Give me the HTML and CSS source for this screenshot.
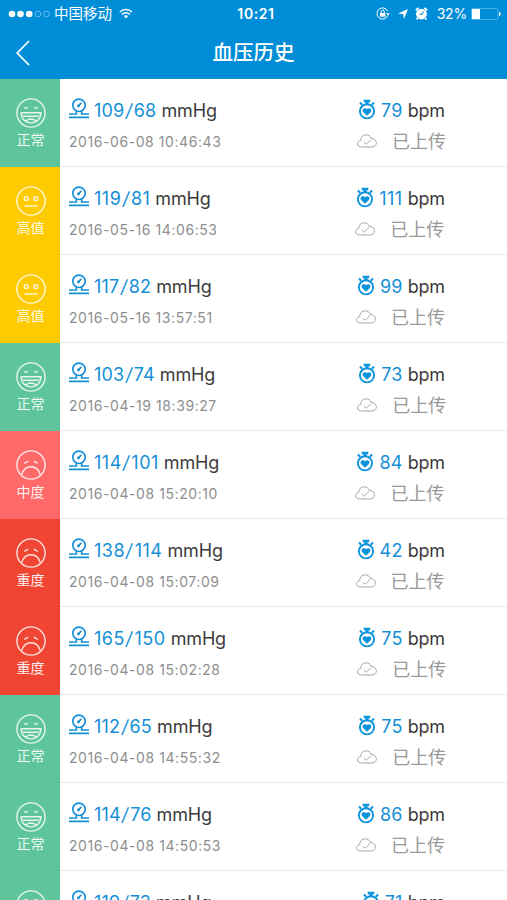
FILE: index.html
```html
<!DOCTYPE html>
<html lang="zh-CN">
<head>
<meta charset="utf-8">
<meta name="viewport" content="width=device-width, initial-scale=1">
<title>血压历史</title>
<link rel="stylesheet" href="styles.css">
</head>
<body>
<svg class="sprite" aria-hidden="true">
  <symbol id="happy" viewBox="0 0 30 30">
    <circle cx="15" cy="15" r="14.1"/>
    <path d="M8 10.3q2-1.4 4 0M18 10.3q2-1.4 4 0M5.2 14.8h19.6c0 6-4 10.1-9.8 10.1S5.2 20.8 5.2 14.8zM7 18.3h16M9.6 23q5.4-4 10.8 0"/>
  </symbol>
  <symbol id="neutral" viewBox="0 0 30 30">
    <circle cx="15" cy="15" r="14.1"/>
    <circle cx="10.3" cy="12.5" r="2"/><circle cx="19.7" cy="12.5" r="2"/>
    <path d="M8.5 20h13"/>
  </symbol>
  <symbol id="sad" viewBox="0 0 30 30">
    <circle cx="15" cy="15" r="14.1"/>
    <path d="M8.4 13.4l3.8-2.3M17.8 11.1l3.8 2.3M5.8 24.6c1.5-5 4.7-7.8 9.2-7.8s7.7 2.8 9.2 7.8"/>
  </symbol>
  <symbol id="gauge" viewBox="0 0 20 21">
    <circle cx="10" cy="7.3" r="6.2"/>
    <path d="M9.6 7.7l2.8-3M7.4 13v3H0M12.6 13v3H20M0 19.4h20"/>
    <circle cx="9.4" cy="7.9" r=".6"/>
  </symbol>
  <symbol id="watch" viewBox="0 0 18 21">
    <circle cx="9" cy="12.3" r="7.1" fill="none" stroke="currentColor" stroke-width="1.9"/>
    <path d="M5.7.7h6.6v2.5h-1.8v2.2h-3V3.2H5.7zM1.3 4.2l1.4-1.4 2.2 2.1-1.5 1.5zM16.7 4.2l-1.4-1.4-2.2 2.1 1.5 1.5zM9 16.8l-3.9-3.9c-1.8-2.1 1.2-5.2 3.9-2.8 2.7-2.4 5.7.7 3.9 2.8z" fill="currentColor"/>
  </symbol>
  <symbol id="cloud" viewBox="0 0 20 14">
    <path d="M4.5 13C2.3 13 .6 11.7.6 9.7c0-1.8 1.3-3 3.1-3.2.1-3.2 2.2-5.7 5.4-5.7 2.6 0 4.4 1.3 5.1 3.5 3 .1 5.2 1.9 5.2 4.5 0 2.7-2 4.2-4.7 4.2zM6.8 7.9l2.4 2.3 4.8-4.5"/>
  </symbol>
</svg>

<header class="header">
  <div class="statusbar">
    <div class="status-left">
      <svg class="signal" viewBox="0 0 42 8"><g fill="#fff"><circle cx="4" cy="4" r="3.3"/><circle cx="12.5" cy="4" r="3.3"/><circle cx="21.2" cy="4" r="3.3"/></g><g fill="none" stroke="#8bd0f3" stroke-width=".7"><circle cx="30" cy="4" r="2.9"/><circle cx="38.5" cy="4" r="2.9"/></g></svg>
      <span class="carrier">中国移动</span>
      <svg class="wifi" viewBox="0 0 14 11"><path d="M.9 4C4.4.5 9.6.5 13.1 4" fill="none" stroke="#fff" stroke-width="1.5"/><path d="M3.1 6.4c2.2-2.2 5.6-2.2 7.8 0" fill="none" stroke="#fff" stroke-width="1.6"/><path d="M4.8 8q2.2-1.7 4.4 0L7 10.5z" fill="#fff"/></svg>
    </div>
    <time class="clock">10:21</time>
    <div class="status-right">
      <svg class="lock" viewBox="0 0 14 13"><path d="M11.6 4.1A5.6 5.6 0 1 0 11.7 8.7" fill="none" stroke="#fff"/><path d="M10.2 6.2h3.6L12 8.7z" fill="#fff"/><path d="M4 6h5.4v3.7H4z" fill="#fff"/><path d="M5.1 6V4.8a1.6 1.6 0 0 1 3.2 0V6" fill="none" stroke="#fff"/></svg>
      <svg class="arrow" viewBox="0 0 10 10"><path d="M10 0L6 10l-.9-4.9L0 4.6z" fill="#fff"/></svg>
      <svg class="alarm" viewBox="0 0 12 12"><circle cx="6" cy="6.5" r="5" fill="#fff"/><path d="M.7 3l2.7-2.2M8.6.8l2.7 2.2M2.5 10.2l-.9 1.4M9.5 10.2l.9 1.4" stroke="#fff" stroke-width="1.7"/><path d="M7.8 4.2L6.2 6.9 4.2 6.5" fill="none" stroke="#008dd8"/></svg>
      <span class="percent">32%</span>
      <svg class="battery" viewBox="0 0 30 12"><rect x=".5" y=".5" width="26.5" height="11" rx="1.4" fill="none" stroke="#5cbcec" stroke-width=".8"/><path d="M1 1h8v10H1z" fill="#fff"/><path d="M28 4q1.7 0 1.7 2T28 8z" fill="#fff"/></svg>
    </div>
  </div>
  <nav class="navbar">
    <svg class="back" viewBox="0 0 14 26"><path d="M13 1L1.2 13 13 25" fill="none" stroke="#fff" stroke-width="1.7"/></svg>
    <h1 class="title">血压历史</h1>
  </nav>
</header>

<main class="list">
  <article class="row">
    <div class="level normal"><svg class="face"><use href="#happy"/></svg><span>正常</span></div>
    <div class="record">
      <div class="pressure"><p class="reading"><svg class="gauge"><use href="#gauge"/></svg><b>109<i>/</i>68</b><span>mmHg</span></p><time>2016-06-08 10:46:43</time></div>
      <div class="pulse"><p class="reading"><svg class="watch"><use href="#watch"/></svg><b>79</b><span>bpm</span></p><p class="sync"><svg class="cloud"><use href="#cloud"/></svg>已上传</p></div>
    </div>
  </article>
  <article class="row">
    <div class="level high"><svg class="face"><use href="#neutral"/></svg><span>高值</span></div>
    <div class="record">
      <div class="pressure"><p class="reading"><svg class="gauge"><use href="#gauge"/></svg><b class="loose">119<i>/</i>81</b><span>mmHg</span></p><time>2016-05-16 14:06:53</time></div>
      <div class="pulse"><p class="reading"><svg class="watch"><use href="#watch"/></svg><b class="loose">111</b><span>bpm</span></p><p class="sync"><svg class="cloud"><use href="#cloud"/></svg>已上传</p></div>
    </div>
  </article>
  <article class="row">
    <div class="level high"><svg class="face"><use href="#neutral"/></svg><span>高值</span></div>
    <div class="record">
      <div class="pressure"><p class="reading"><svg class="gauge"><use href="#gauge"/></svg><b>117<i>/</i>82</b><span>mmHg</span></p><time>2016-05-16 13:57:51</time></div>
      <div class="pulse"><p class="reading"><svg class="watch"><use href="#watch"/></svg><b>99</b><span>bpm</span></p><p class="sync"><svg class="cloud"><use href="#cloud"/></svg>已上传</p></div>
    </div>
  </article>
  <article class="row">
    <div class="level normal"><svg class="face"><use href="#happy"/></svg><span>正常</span></div>
    <div class="record">
      <div class="pressure"><p class="reading"><svg class="gauge"><use href="#gauge"/></svg><b>103<i>/</i>74</b><span>mmHg</span></p><time>2016-04-19 18:39:27</time></div>
      <div class="pulse"><p class="reading"><svg class="watch"><use href="#watch"/></svg><b>73</b><span>bpm</span></p><p class="sync"><svg class="cloud"><use href="#cloud"/></svg>已上传</p></div>
    </div>
  </article>
  <article class="row">
    <div class="level moderate"><svg class="face"><use href="#sad"/></svg><span>中度</span></div>
    <div class="record">
      <div class="pressure"><p class="reading"><svg class="gauge"><use href="#gauge"/></svg><b class="loose">114<i>/</i>101</b><span>mmHg</span></p><time>2016-04-08 15:20:10</time></div>
      <div class="pulse"><p class="reading"><svg class="watch"><use href="#watch"/></svg><b>84</b><span>bpm</span></p><p class="sync"><svg class="cloud"><use href="#cloud"/></svg>已上传</p></div>
    </div>
  </article>
  <article class="row">
    <div class="level severe"><svg class="face"><use href="#sad"/></svg><span>重度</span></div>
    <div class="record">
      <div class="pressure"><p class="reading"><svg class="gauge"><use href="#gauge"/></svg><b class="loose">138<i>/</i>114</b><span>mmHg</span></p><time>2016-04-08 15:07:09</time></div>
      <div class="pulse"><p class="reading"><svg class="watch"><use href="#watch"/></svg><b>42</b><span>bpm</span></p><p class="sync"><svg class="cloud"><use href="#cloud"/></svg>已上传</p></div>
    </div>
  </article>
  <article class="row">
    <div class="level severe"><svg class="face"><use href="#sad"/></svg><span>重度</span></div>
    <div class="record">
      <div class="pressure"><p class="reading"><svg class="gauge"><use href="#gauge"/></svg><b class="loose">165<i>/</i>150</b><span>mmHg</span></p><time>2016-04-08 15:02:28</time></div>
      <div class="pulse"><p class="reading"><svg class="watch"><use href="#watch"/></svg><b>75</b><span>bpm</span></p><p class="sync"><svg class="cloud"><use href="#cloud"/></svg>已上传</p></div>
    </div>
  </article>
  <article class="row">
    <div class="level normal"><svg class="face"><use href="#happy"/></svg><span>正常</span></div>
    <div class="record">
      <div class="pressure"><p class="reading"><svg class="gauge"><use href="#gauge"/></svg><b>112<i>/</i>65</b><span>mmHg</span></p><time>2016-04-08 14:55:32</time></div>
      <div class="pulse"><p class="reading"><svg class="watch"><use href="#watch"/></svg><b>75</b><span>bpm</span></p><p class="sync"><svg class="cloud"><use href="#cloud"/></svg>已上传</p></div>
    </div>
  </article>
  <article class="row">
    <div class="level normal"><svg class="face"><use href="#happy"/></svg><span>正常</span></div>
    <div class="record">
      <div class="pressure"><p class="reading"><svg class="gauge"><use href="#gauge"/></svg><b>114<i>/</i>76</b><span>mmHg</span></p><time>2016-04-08 14:50:53</time></div>
      <div class="pulse"><p class="reading"><svg class="watch"><use href="#watch"/></svg><b>86</b><span>bpm</span></p><p class="sync"><svg class="cloud"><use href="#cloud"/></svg>已上传</p></div>
    </div>
  </article>
  <article class="row">
    <div class="level normal"><svg class="face"><use href="#happy"/></svg></div>
    <div class="record">
      <div class="pressure"><p class="reading"><svg class="gauge"><use href="#gauge"/></svg><b>119<i>/</i>73</b><span>mmHg</span></p></div>
      <div class="pulse"><p class="reading"><svg class="watch"><use href="#watch"/></svg><b>71</b><span>bpm</span></p></div>
    </div>
  </article>
</main>
</body>
</html>
```
FILE: styles.css
```css
* { box-sizing: border-box; }

body {
  margin: 0;
  height: 900px;
  overflow: hidden;
  display: flex;
  flex-direction: column;
  background: #fff;
  font-family: Inter, "Noto Sans CJK SC", sans-serif;
  color: #3c3c3c;
}

p, h1 { margin: 0; }
svg { display: block; flex: none; }
.sprite { display: none; }

.header {
  flex: none;
  height: 79px;
  background: #008dd8;
  color: #fff;
}

.statusbar {
  height: 27px;
  display: grid;
  grid-template-columns: 1fr auto 1fr;
  align-items: center;
  padding: 0 6px 0 8px;
}
.status-left, .status-right { display: flex; align-items: center; }
.status-right { justify-content: flex-end; }
.signal { width: 42px; height: 8px; }
.carrier { margin-left: 4px; font-size: 14.5px; line-height: 20px; }
.wifi { width: 14px; height: 11px; margin-left: 7px; }
.clock { margin-left: 3px; font-size: 14px; font-weight: 600; letter-spacing: .6px; }
.lock { width: 14px; height: 13px; }
.arrow { width: 10px; height: 10px; margin-left: 8px; }
.alarm { width: 13px; height: 13px; margin-left: 7px; }
.percent { margin-left: 9px; font-size: 14px; letter-spacing: -.2px; }
.battery { width: 30px; height: 12px; margin-left: 4px; }

.navbar {
  height: 52px;
  display: grid;
  grid-template-columns: 60px 1fr 60px;
  align-items: center;
}
.back { width: 14px; height: 26px; margin-left: 16px; }
.title {
  text-align: center;
  font-size: 20.5px;
  line-height: 28px;
  font-weight: 500;
}

.list { flex: 1; min-height: 0; overflow: hidden; }
.row { display: flex; height: 88px; }

.level {
  width: 60px;
  flex: none;
  display: flex;
  flex-direction: column;
  align-items: center;
  padding: 19px 0 0 1px;
  color: #fff;
  font-size: 14px;
  line-height: 20px;
}
.level span { margin-top: 2px; opacity: .9; }
.face {
  width: 30px;
  height: 30px;
  fill: none;
  stroke: rgba(255, 255, 255, .85);
  stroke-width: 1.4;
}
.normal { background: #5ec49b; }
.high { background: #fecb00; }
.moderate { background: #ff6969; }
.severe { background: #f04533; }

.record {
  flex: 1;
  display: flex;
  justify-content: space-between;
  padding: 19px 62px 0 9px;
  border-bottom: 1px solid #e8e8e8;
}
.reading {
  display: flex;
  align-items: center;
  height: 24px;
  font-size: 18px;
  white-space: nowrap;
}
.reading b { font-weight: 400; letter-spacing: .2px; color: #148fd7; }
.reading .loose { letter-spacing: .5px; }
.reading i {
  display: inline-block;
  margin: 0 1.2px 0 1.4px;
  font-style: normal;
  transform: skewX(-8deg);
}
.reading span { margin-left: 5px; letter-spacing: -.15px; }
.gauge {
  width: 20px;
  height: 21px;
  margin: -4px 5px 0 0;
  fill: none;
  stroke: #148fd7;
  stroke-width: 1.6;
}
.watch { width: 18px; height: 21px; margin: -2px 5px 0 0; color: #0c93dc; }
.pressure time {
  display: block;
  margin-top: 10px;
  font-size: 14px;
  line-height: 20px;
  letter-spacing: .57px;
  color: #8e8e8e;
}
.sync {
  display: flex;
  align-items: center;
  width: 0;
  height: 24px;
  margin-top: 6px;
  font-size: 18px;
  font-weight: 400;
  white-space: nowrap;
  color: #999;
}
.cloud {
  width: 20px;
  height: 14px;
  margin: 2px 15px 0 -1px;
  fill: none;
  stroke: #a6a6a6;
  stroke-width: 1;
}
```
